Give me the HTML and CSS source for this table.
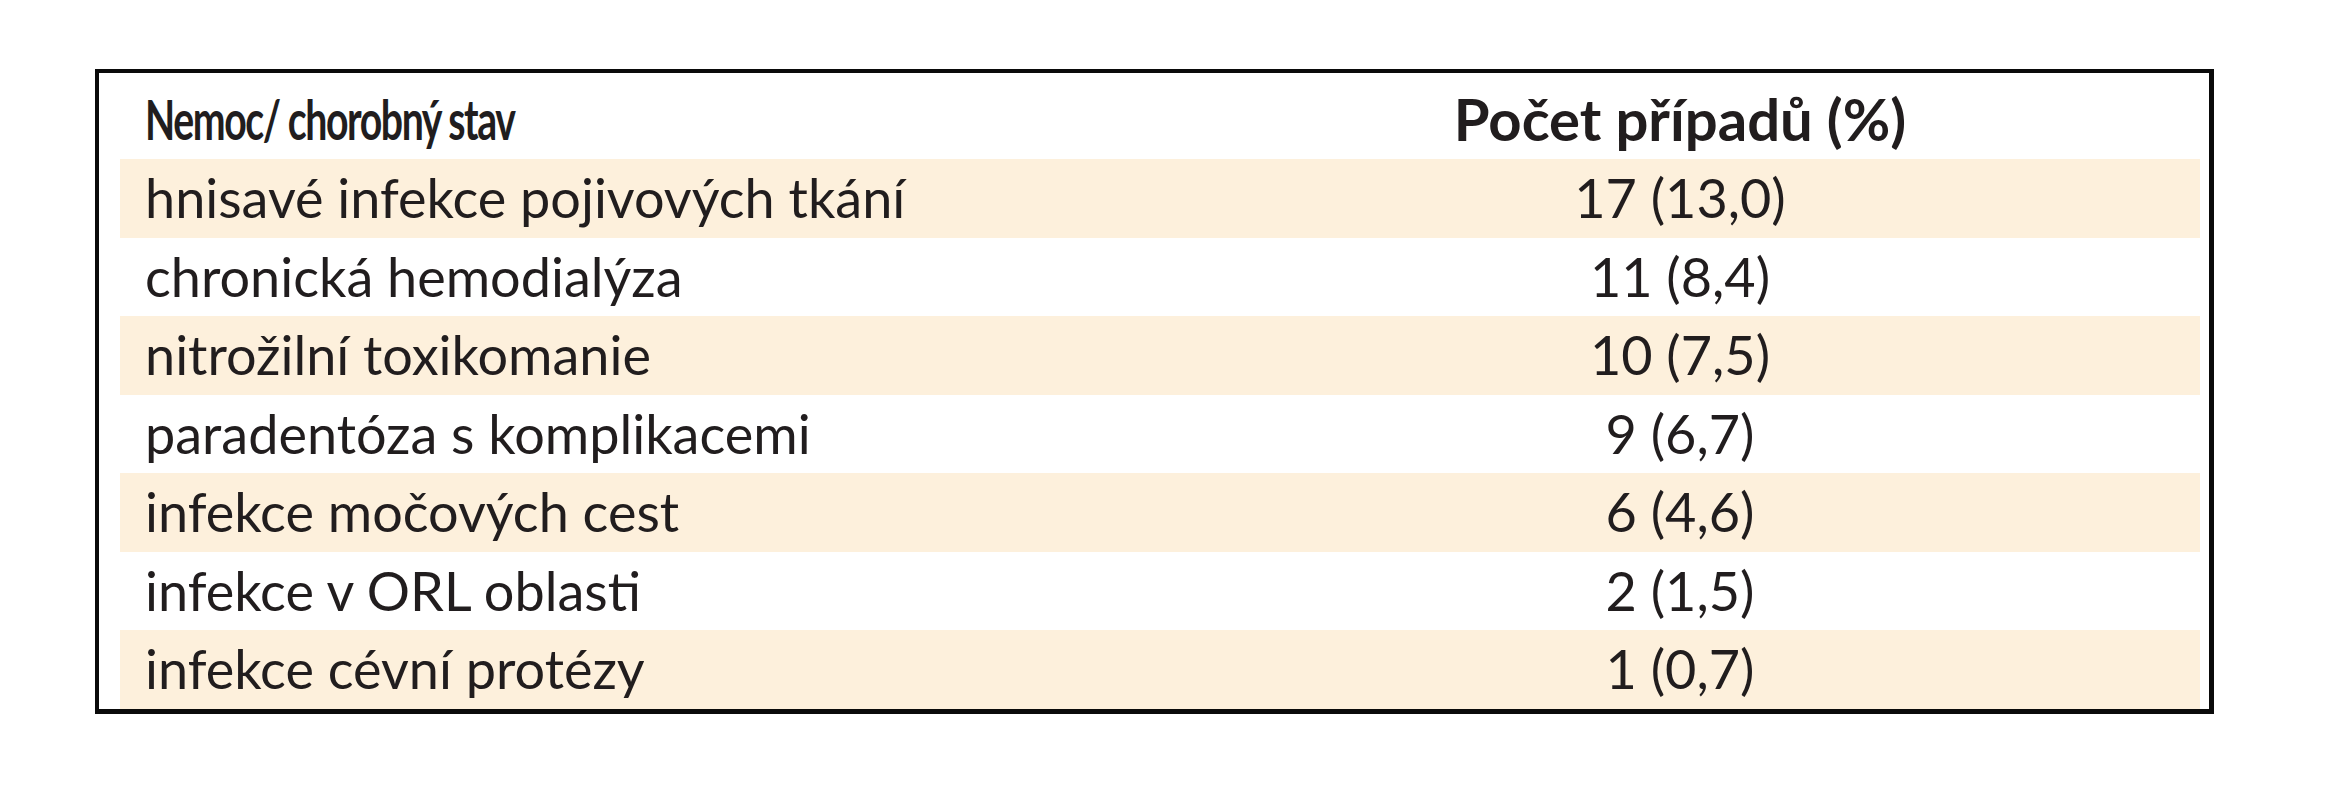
FILE: index.html
```html
<!DOCTYPE html>
<html lang="cs">
<head>
<meta charset="utf-8">
<title>Tabulka</title>
<link rel="stylesheet" href="styles.css">
</head>
<body>
<div class="page">
  <div class="frame">
    <div class="table">
      <div class="row head">
        <div class="cell name"><span class="cond-left">Nemoc/ chorobný stav</span></div>
        <div class="cell num head-num">Počet případů (%)</div>
      </div>
      <div class="row alt">
        <div class="cell name">hnisavé infekce pojivových tkání</div>
        <div class="cell num">17 (13,0)</div>
      </div>
      <div class="row">
        <div class="cell name">chronická hemodialýza</div>
        <div class="cell num">11 (8,4)</div>
      </div>
      <div class="row alt">
        <div class="cell name">nitrožilní toxikomanie</div>
        <div class="cell num">10 (7,5)</div>
      </div>
      <div class="row">
        <div class="cell name">paradentóza s komplikacemi</div>
        <div class="cell num">9 (6,7)</div>
      </div>
      <div class="row alt">
        <div class="cell name">infekce močových cest</div>
        <div class="cell num">6 (4,6)</div>
      </div>
      <div class="row">
        <div class="cell name">infekce v ORL oblasti</div>
        <div class="cell num">2 (1,5)</div>
      </div>
      <div class="row alt">
        <div class="cell name">infekce cévní protézy</div>
        <div class="cell num">1 (0,7)</div>
      </div>
    </div>
  </div>
</div>
</body>
</html>
```
FILE: styles.css
```css
html, body {
  margin: 0;
  padding: 0;
  background: #ffffff;
}

.page {
  padding: 69px 0 0 95px;
}

.frame {
  border-style: solid;
  border-color: #0a0a0a;
  border-width: 4px 5px 5px 4px;
  padding: 0 9px 0 21px;
  box-sizing: border-box;
  width: 2119px;
}

.table {
  display: flex;
  flex-direction: column;
  font-family: Lato, "Open Sans", sans-serif;
  font-size: 54px;
  color: #211d1e;
}

.row {
  display: grid;
  grid-template-columns: 1040px 1fr;
  height: 78.5px;
  line-height: 78.5px;
}

.row.alt {
  background: #fdf0dc;
}

.row.head {
  height: 86px;
  font-weight: 700;
}

.row.head .cell {
  padding-top: 5px;
  line-height: 81px;
}

.cell {
  white-space: nowrap;
}

.cell.name {
  padding-left: 25px;
}

.cell.num {
  text-align: center;
}

.head-num {
  font-size: 58px;
}

.cond-left {
  display: inline-block;
  font-size: 56px;
  letter-spacing: -2px;
  transform: scaleX(0.7);
  transform-origin: left center;
}
```
